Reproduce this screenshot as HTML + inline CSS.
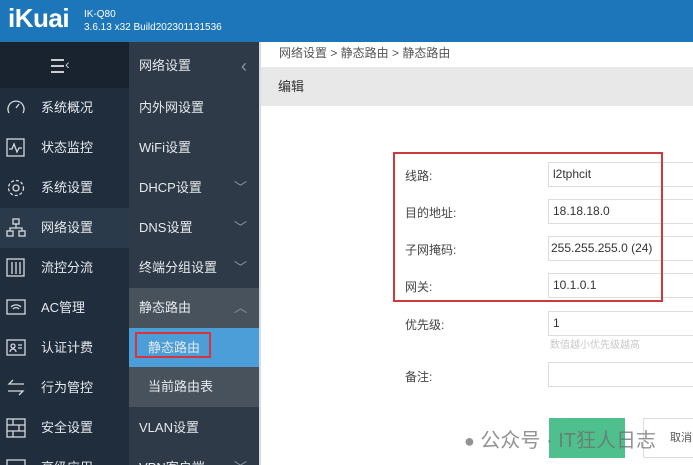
<!DOCTYPE html>
<html><head><meta charset="utf-8"><style>
*{margin:0;padding:0;box-sizing:border-box}
html,body{width:693px;height:465px;overflow:hidden}
body{position:relative;font-family:"Liberation Sans","Noto Sans CJK SC",sans-serif;background:#fff}
.a{position:absolute}
#hd{left:0;top:0;width:693px;height:42px;background:#1c76b9;color:#fff}
#nav{left:0;top:42px;width:129px;height:423px;background:#1f2d3d}
#sub{left:129px;top:42px;width:130px;height:423px;background:#2e3a47}
.ni{position:absolute;left:0;width:129px;height:40px;color:#e6e9ec;font-size:13px;line-height:40px}
.ni span{position:absolute;left:41px}
.ni svg{position:absolute;left:6px;top:10px}
.si{position:absolute;left:0;width:130px;height:40px;color:#e6e9ec;font-size:13px;line-height:40px;padding-left:10px}
.chev{position:absolute;right:12px;top:0;color:#8a96a3;font-size:13px}
.lbl{position:absolute;left:405px;font-size:12px;color:#444}
.inp{position:absolute;left:548px;width:160px;height:25px;border:1px solid #ddd;font-size:12px;color:#333;line-height:23px;padding-left:4px}
</style></head><body>
<div class="a" id="hd">
 <div class="a" style="left:8px;top:3px;font-size:26px;font-weight:bold;letter-spacing:-0.5px">iKuai</div>
 <div class="a" style="left:84px;top:8px;font-size:10px;line-height:13px">IK-Q80<br>3.6.13 x32 Build202301131536</div>
</div>
<div class="a" id="nav">
 <div class="a" style="left:0;top:0;width:129px;height:46px;background:#18232f"></div>
 <div class="a" style="left:51px;top:16px;width:22px;height:18px;">
  <div class="a" style="top:1px;width:13px;height:2px;background:#ccc"></div>
  <div class="a" style="top:7px;width:13px;height:2px;background:#ccc"></div>
  <div class="a" style="top:13px;width:13px;height:2px;background:#ccc"></div>
  <div class="a" style="left:14px;top:-2px;color:#ccc;font-size:14px">‹</div>
 </div>
 <div class="ni" style="top:46px"><svg width="20" height="20" fill="none" stroke="#d5d9de" stroke-width="1.3"><path d="M3 15A8 8 0 1 1 17 15"/><path d="M10 10l3-4"/></svg><span>系统概况</span></div>
 <div class="ni" style="top:86px"><svg width="20" height="20" fill="none" stroke="#d5d9de" stroke-width="1.3"><rect x="1" y="1" width="17" height="17"/><path d="M3 11h3l2-5 3 8 2-4h3"/></svg><span>状态监控</span></div>
 <div class="ni" style="top:126px"><svg width="20" height="20" fill="none" stroke="#d5d9de" stroke-width="1.3"><circle cx="10" cy="10" r="3"/><circle cx="10" cy="10" r="7.5" stroke-dasharray="3 2"/></svg><span>系统设置</span></div>
 <div class="ni" style="top:166px;background:#2b3a4b"><svg width="20" height="20" fill="none" stroke="#d5d9de" stroke-width="1.3"><rect x="7" y="1" width="6" height="5"/><rect x="1" y="13" width="6" height="5"/><rect x="13" y="13" width="6" height="5"/><path d="M10 6v4M4 13v-3h12v3"/></svg><span>网络设置</span></div>
 <div class="ni" style="top:206px"><svg width="20" height="20" fill="none" stroke="#d5d9de" stroke-width="1.3"><rect x="1" y="1" width="17" height="17"/><path d="M6 4v12M10 4v12M14 4v12"/></svg><span>流控分流</span></div>
 <div class="ni" style="top:246px"><svg width="20" height="20" fill="none" stroke="#d5d9de" stroke-width="1.3"><rect x="1" y="2" width="18" height="14"/><path d="M5 9a7 7 0 0 1 10 0M7 11a4 4 0 0 1 6 0"/></svg><span>AC管理</span></div>
 <div class="ni" style="top:286px"><svg width="20" height="20" fill="none" stroke="#d5d9de" stroke-width="1.3"><rect x="1" y="2" width="18" height="15"/><circle cx="7" cy="8" r="2"/><path d="M4 14a3 3 0 0 1 6 0M12 7h4M12 10h4"/></svg><span>认证计费</span></div>
 <div class="ni" style="top:326px"><svg width="20" height="20" fill="none" stroke="#d5d9de" stroke-width="1.3"><path d="M18 6H3l4-4M2 13h15l-4 4"/></svg><span>行为管控</span></div>
 <div class="ni" style="top:366px"><svg width="20" height="20" fill="none" stroke="#d5d9de" stroke-width="1.3"><rect x="1" y="1" width="18" height="18"/><path d="M1 7h18M1 13h18M7 1v6M13 7v6M7 13v6"/></svg><span>安全设置</span></div>
 <div class="ni" style="top:406px"><svg width="20" height="20" fill="none" stroke="#d5d9de" stroke-width="1.3"><rect x="1" y="2" width="18" height="16"/></svg><span>高级应用</span></div>
</div>
<div class="a" id="sub">
 <div class="si" style="top:4px">网络设置<span class="chev" style="font-size:18px">‹</span></div>
 <div class="si" style="top:46px">内外网设置</div>
 <div class="si" style="top:86px">WiFi设置</div>
 <div class="si" style="top:126px">DHCP设置<span class="chev">﹀</span></div>
 <div class="si" style="top:166px">DNS设置<span class="chev">﹀</span></div>
 <div class="si" style="top:206px">终端分组设置<span class="chev">﹀</span></div>
 <div class="si" style="top:246px;background:#48525d">静态路由<span class="chev">︿</span></div>
 <div class="si" style="top:286px;background:#4b9ed8;height:39px;padding-left:19px">静态路由</div>
 <div class="a" style="left:6px;top:290px;width:76px;height:26px;border:2px solid #d9343c"></div>
 <div class="si" style="top:325px;background:#48525d;padding-left:19px">当前路由表</div>
 <div class="si" style="top:366px">VLAN设置</div>
 <div class="si" style="top:406px">VPN客户端<span class="chev">﹀</span></div>
</div>
<div class="a" style="left:259px;top:42px;width:434px;height:25px;background:#fff;font-size:12px;color:#555;line-height:23px;padding-left:20px">网络设置 &gt; 静态路由 &gt; 静态路由</div>
<div class="a" style="left:259px;top:67px;width:434px;height:39px;background:#e8e8e8;font-size:13px;color:#333;line-height:39px;padding-left:19px">编辑</div>
<div class="a" style="left:259px;top:42px;width:2px;height:423px;background:#d8dde3"></div>
<div class="lbl" style="top:167px">线路:</div><div class="inp" style="top:162px">l2tphcit</div>
<div class="lbl" style="top:204px">目的地址:</div><div class="inp" style="top:199px">18.18.18.0</div>
<div class="lbl" style="top:241px">子网掩码:</div><div class="inp" style="top:236px;padding-left:2px">255.255.255.0 (24)</div>
<div class="lbl" style="top:278px">网关:</div><div class="inp" style="top:273px">10.1.0.1</div>
<div class="a" style="left:393px;top:152px;width:270px;height:150px;border:2px solid #cb3b3e"></div>
<div class="lbl" style="top:316px">优先级:</div><div class="inp" style="top:311px">1</div>
<div class="a" style="left:550px;top:336px;font-size:10px;color:#c8c8c8">数值越小优先级越高</div>
<div class="lbl" style="top:368px">备注:</div><div class="inp" style="top:362px"></div>
<div class="a" style="left:549px;top:418px;width:76px;height:40px;background:#4fc08d"></div>
<div class="a" style="left:643px;top:418px;width:60px;height:40px;border:1px solid #ddd;font-size:11px;color:#555;line-height:38px;padding-left:26px">取消</div>
<div class="a" style="left:464px;top:424px;font-size:20px;color:rgba(110,110,110,0.75);white-space:nowrap"><span style="font-size:18px">●</span> 公众号 · IT狂人日志</div>
</body></html>
